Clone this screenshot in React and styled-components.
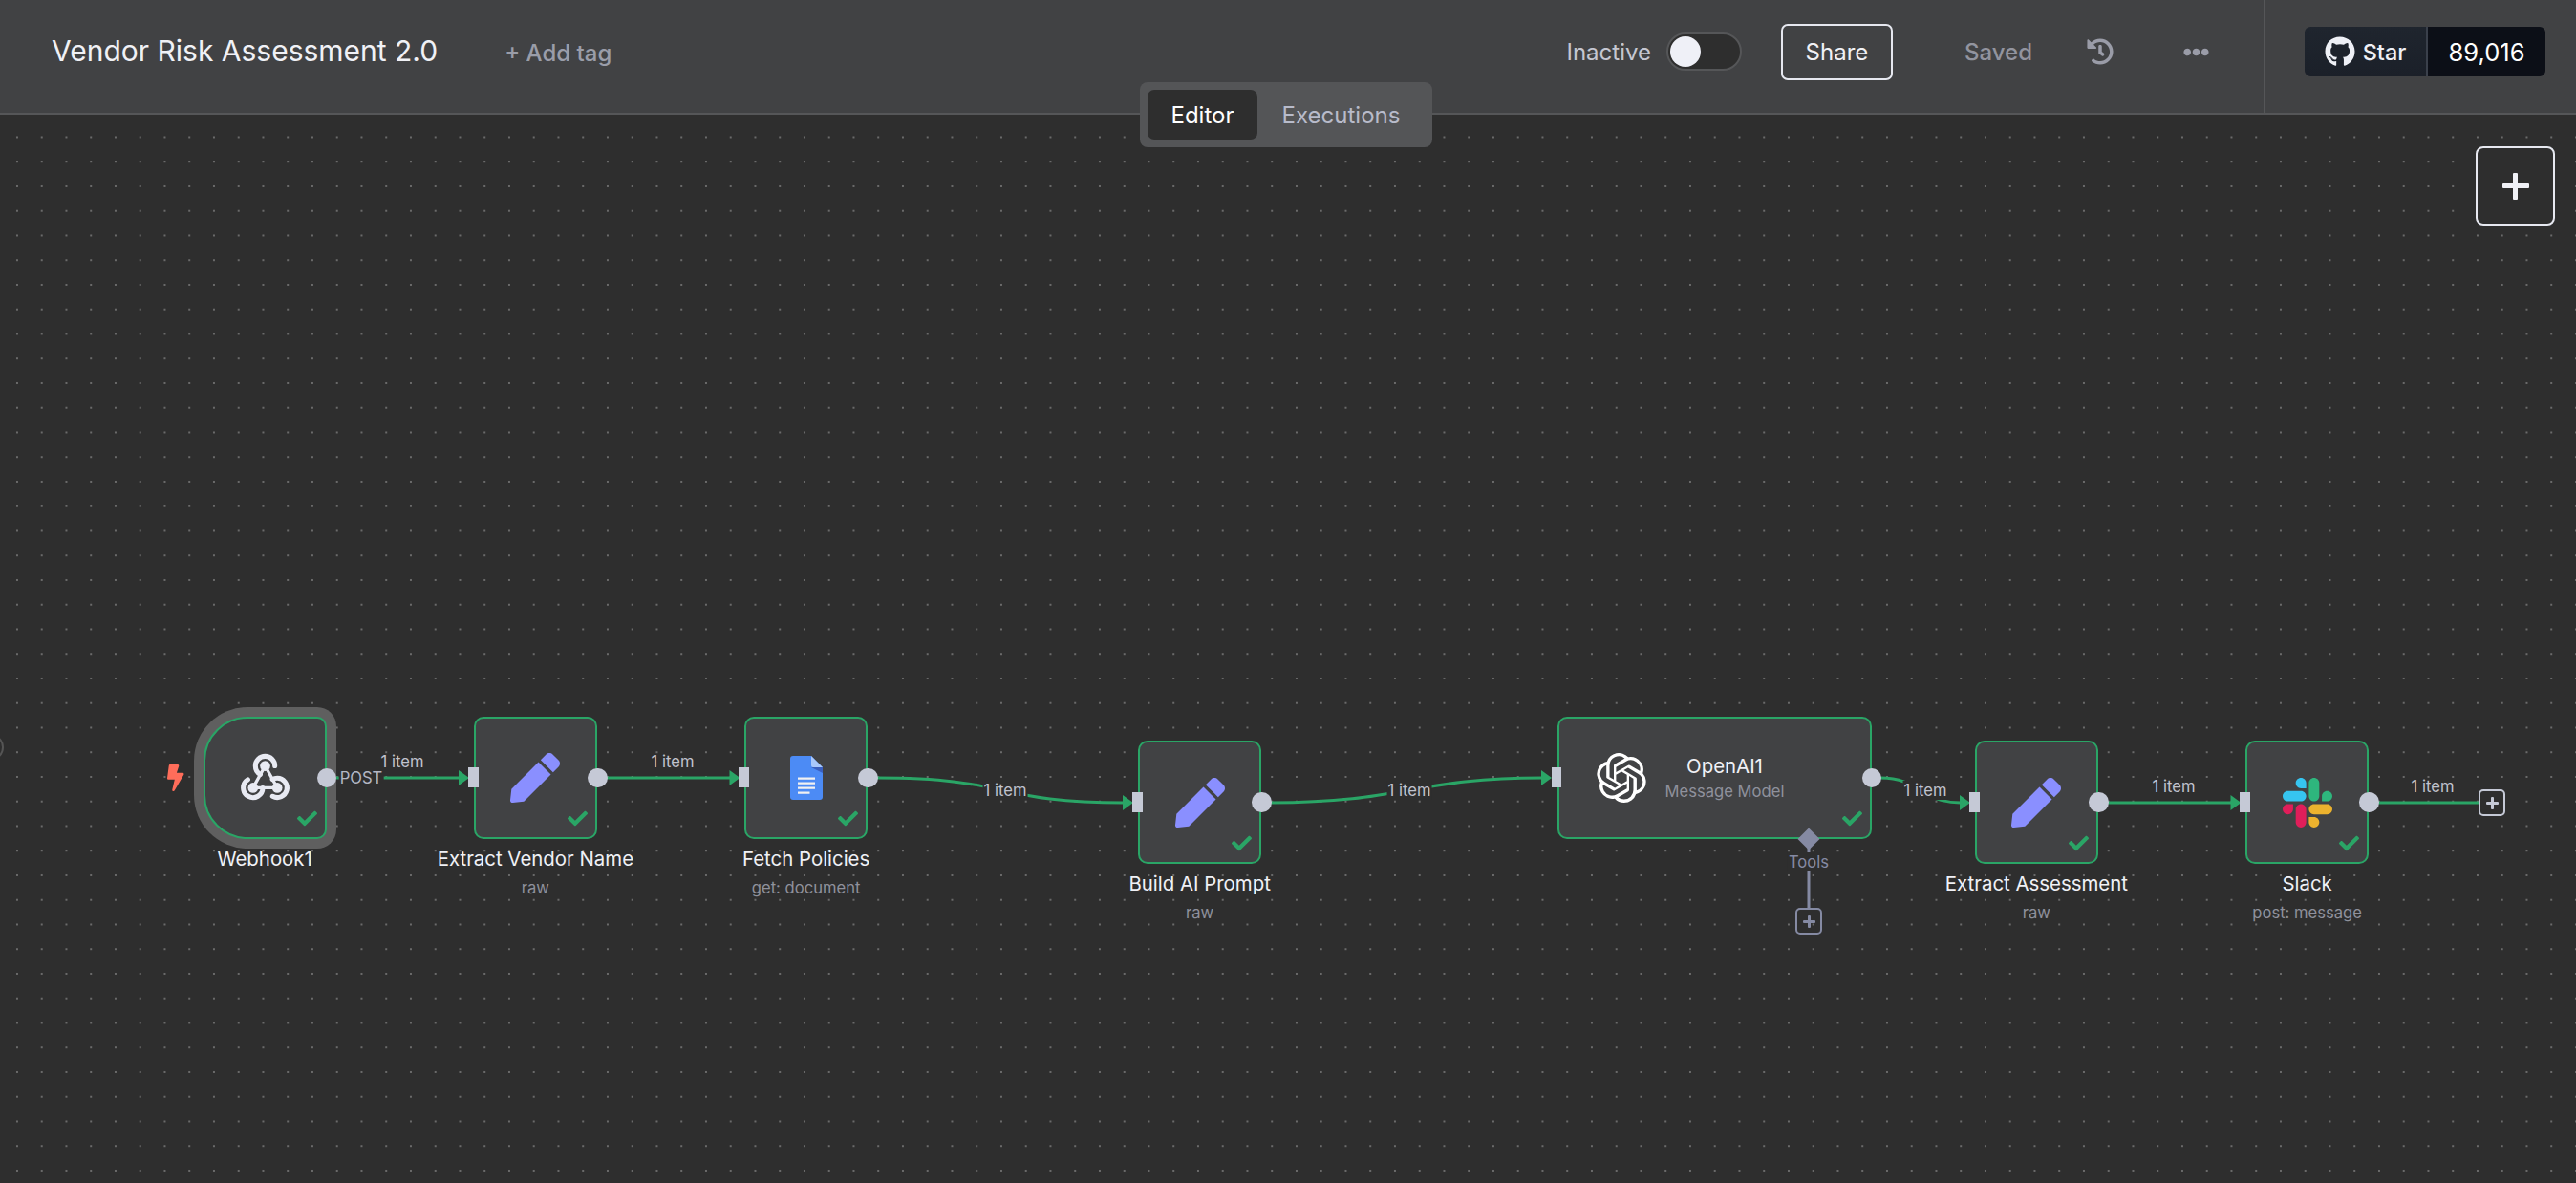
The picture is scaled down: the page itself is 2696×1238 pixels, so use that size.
import React from 'react';
import styled, { createGlobalStyle } from 'styled-components';
import { FaPen, FaCheck, FaBolt, FaHistory, FaEllipsisH, FaGithub } from 'react-icons/fa';
import { SiOpenai } from 'react-icons/si';

const GREEN = '#2aa566';
const HANDLE = '#c5c9d6';
const Global = createGlobalStyle`
  html, body { margin: 0; padding: 0; background: #2e2e2e; }
  * { box-sizing: border-box; }
  body { font-family: Inter, "Liberation Sans", sans-serif; overflow: hidden; }
`;
const Page = styled.div`position: relative; display: flex; flex-direction: column; width: 2696px; height: 1238px;`;
const Header = styled.header`
  display: flex; align-items: stretch; height: 120px; background: #414244; border-bottom: 2px solid #555658; flex: none;
`;
const Title = styled.div`
  align-self: center; margin: 0 0 12px 54px; font-size: 30px; font-weight: 400; color: #f0f1f6; white-space: nowrap;
`;
const AddTag = styled.div`
  align-self: center; margin: 0 0 8px 70px; font-size: 24px; font-weight: 500; color: #9a9da9; white-space: nowrap;
`;
const Actions = styled.div`
  margin-left: auto; display: flex; align-items: center; padding: 0 57px 10px 0;
`;
const StatusText = styled.span`font-size: 24px; font-weight: 400; color: #c5c7d2; white-space: nowrap;`;
const Toggle = styled.div`
  position: relative; width: 79px; height: 40px; margin-left: 16px; border-radius: 20px; background: #2e2e2e; border: 2px solid #555658;
  &::after { content: ''; position: absolute; left: 2px; top: 2px; width: 32px; height: 32px; border-radius: 50%; background: #eff0f7; }
`;
const ShareButton = styled.button`
  width: 117px; height: 59px; margin-left: 41px; border: 2.5px solid #e6e8f0; border-radius: 7px; background: transparent;
  color: #f0f1f6; font: 400 24px Inter, sans-serif; padding: 0;
`;
const Saved = styled.span`margin-left: 75px; font-size: 24px; font-weight: 500; color: #92949f;`;
const HistoryIcon = styled(FaHistory)`margin-left: 57px; width: 28px; height: 28px; color: #9a9ca8;`;
const MoreIcon = styled(FaEllipsisH)`margin-left: 73px; width: 27px; height: 27px; color: #9a9ca8;`;
const GithubArea = styled.div`
  width: 327px; border-left: 2px solid #555658; display: flex; align-items: center; padding: 0 0 10px 41px;
`;
const StarButton = styled.div`
  width: 252px; height: 52px; display: flex; border-radius: 6px; overflow: hidden; color: #eef0f6;
  font-size: 23.5px; font-weight: 500;
`;
const StarLabel = styled.div`
  width: 129px; display: flex; align-items: center; justify-content: center; gap: 8px;
  background: linear-gradient(180deg, #1f252e, #1b2029); border-right: 2px solid #3a404b;
`;
const StarCount = styled.div`flex: 1; display: flex; align-items: center; justify-content: center; background: #0c0f17; color: #fff; font-size: 25.5px; font-weight: 400;`;
const Tabs = styled.div`
  position: absolute; left: 1193px; top: 86px; width: 306px; height: 68px; padding: 8px; display: flex; background: #545557; border-radius: 8px; z-index: 3;
`;
const Tab = styled.div`
  height: 52px; display: flex; align-items: center; justify-content: center; border-radius: 7px; font-size: 24px; font-weight: 400;
  width: ${p => p.$w}px; color: ${p => (p.$active ? '#fff' : '#b8bbca')}; background: ${p => (p.$active ? '#2e2e2e' : 'transparent')};
`;
const Canvas = styled.main`
  position: relative; flex: 1; overflow: hidden; background-color: #2e2e2e;
  background-image: radial-gradient(circle at center, #939393 0, #939393 0.5px, transparent 1px);
  background-size: 25.75px 25.75px; background-position: 5.1px 10.6px;
`;
const Ghost = styled.div`
  position: absolute; left: -24px; top: 648px; width: 28px; height: 28px; border-radius: 50%; border: 2px solid #555;
`;
const AddNode = styled.div`
  position: absolute; left: 2591px; top: 33px; width: 83px; height: 83px; border: 2.5px solid #e6e8f0; border-radius: 8px;
  display: flex; align-items: center; justify-content: center; background: #2e2e2e;
`;
const PlusMark = styled.span`
  position: relative; display: block; width: ${p => p.$s}px; height: ${p => p.$s}px; color: ${p => p.$c};
  &::before, &::after { content: ''; position: absolute; background: currentColor; border-radius: 1px; }
  &::before { left: 0; right: 0; top: calc(50% - ${p => p.$t / 2}px); height: ${p => p.$t}px; }
  &::after { top: 0; bottom: 0; left: calc(50% - ${p => p.$t / 2}px); width: ${p => p.$t}px; }
`;
const EdgeLayer = styled.svg`position: absolute; left: 0; top: 0; width: 2696px; height: 1118px; pointer-events: none;`;
const NodeItem = styled.div`
  position: absolute; left: ${p => p.$x}px; top: ${p => p.$y - 120}px; width: ${p => p.$w}px; display: flex; flex-direction: column; align-items: center;
`;
const NodeBox = styled.div`
  position: relative; width: 100%; height: 128.75px; background: #414244; border: 2.8px solid ${GREEN};
  border-radius: ${p => (p.$trigger ? '46px 10px 10px 46px' : '10px')};
  display: flex; align-items: center; justify-content: center;
  ${p => p.$trigger && 'box-shadow: 0 0 0 10px #5f5f5f;'}
`;
const OutHandle = styled.span`
  position: absolute; right: -12.8px; top: 50%; width: 20.5px; height: 20.5px; margin-top: -10.25px; border-radius: 50%; background: ${HANDLE}; z-index: 2;
`;
const InHandle = styled.span`
  position: absolute; left: -7.8px; top: 50%; width: 10.5px; height: 21px; margin-top: -10.5px; background: ${HANDLE}; z-index: 2;
`;
const Done = styled(FaCheck)`position: absolute; right: 8px; bottom: 9px; width: 21px; height: 21px; color: ${GREEN};`;
const NodeName = styled.div`margin-top: 9px; font-size: 20.4px; font-weight: 400; line-height: 24px; color: #f0f1f6; white-space: nowrap;`;
const NodeSub = styled.div`margin-top: 8px; font-size: 16.6px; line-height: 20px; color: #8f919c; white-space: nowrap;`;
const Pen = styled(FaPen)`width: 52px; height: 52px; color: #8a8fff;`;
const Bolt = styled(FaBolt)`position: absolute; left: 175px; top: 680px; width: 17.5px; height: 28px; color: #ff6d5a;`;
const WideContent = styled.div`display: flex; align-items: center; width: 100%; padding-left: 39px;`;
const WideText = styled.div`width: 165px; display: flex; flex-direction: column; align-items: center;`;
const WideName = styled.div`font-size: 20.4px; font-weight: 400; line-height: 24px; color: #f0f1f6;`;
const WideSub = styled.div`margin-top: 4px; font-size: 16.6px; line-height: 20px; color: #8f919c;`;
const EdgeLabel = styled.div`
  position: absolute; left: ${p => p.$x}px; top: ${p => p.$y - 120}px; transform: translate(-50%, -50%); padding: 0 1px;
  font-size: 16.6px; line-height: 20px; color: ${p => p.$c || '#c0c3ce'}; white-space: nowrap;
  background: ${p => (p.$bg ? '#2e2e2e' : 'transparent')};
`;
const ToolsAdd = styled.div`
  position: absolute; left: 1879px; top: 830px; width: 28px; height: 28px; border: 2.6px solid #858aa3; border-radius: 5px;
  display: flex; align-items: center; justify-content: center;
`;
const EndAdd = styled.div`
  position: absolute; left: 2594px; top: 706px; width: 28px; height: 28px; border: 2.6px solid ${HANDLE}; border-radius: 5px;
  display: flex; align-items: center; justify-content: center; background: #2e2e2e;
`;

const WebhookIcon = () => (
  <svg width="61" height="61" viewBox="0 0.7 24 24" fill="none" stroke="#e8eaf3" strokeLinecap="round">
    <path strokeWidth="2" d="M16 8a4 4 0 1 0-8 0c0 1.5.77 2.82 2 3.5" />
    <path strokeWidth="2" d="M4.88 13.61a4 4 0 1 0 6.12 3.39" />
    <path strokeWidth="2" d="M15.07 20.5a4 4 0 1 0 1.93-7.5c-.7 0-1.42.18-2 .5" />
    <path strokeWidth="1.3" d="M12 8 7 17h10z" />
    <g fill="#e8eaf3" stroke="none">
      <circle cx="12" cy="8" r="2.1" />
      <circle cx="7" cy="17" r="2.1" />
      <circle cx="17" cy="17" r="2.1" />
    </g>
  </svg>
);
const DocsIcon = () => (
  <svg width="34" height="46" viewBox="0 0 34 46">
    <path fill="#4c8bf5" d="M3 0h19l12 12v31a3 3 0 0 1-3 3H3a3 3 0 0 1-3-3V3a3 3 0 0 1 3-3z" />
    <path fill="#3a5fbf" d="M22 12l12 6v-6z" />
    <path fill="#a9c8fb" d="M22 0l12 12H24a2 2 0 0 1-2-2z" />
    <path fill="#f1f1f1" d="M8 22.5h18v2.2H8zM8 27.5h18v2.2H8zM8 32.5h18v2.2H8zM8 37.5h12.5v2.2H8z" />
  </svg>
);
const SlackIcon = () => (
  <svg width="52" height="52" viewBox="0 0 122.8 122.8">
    <path fill="#e01e5a" d="M25.8 77.6c0 7.1-5.8 12.9-12.9 12.9S0 84.7 0 77.6s5.8-12.9 12.9-12.9h12.9v12.9zm6.5 0c0-7.1 5.8-12.9 12.9-12.9s12.9 5.8 12.9 12.9v32.3c0 7.1-5.8 12.9-12.9 12.9s-12.9-5.8-12.9-12.9V77.6z" />
    <path fill="#36c5f0" d="M45.2 25.8c-7.1 0-12.9-5.8-12.9-12.9S38.1 0 45.2 0s12.9 5.8 12.9 12.9v12.9H45.2zm0 6.5c7.1 0 12.9 5.8 12.9 12.9s-5.8 12.9-12.9 12.9H12.9C5.8 58.1 0 52.3 0 45.2s5.8-12.9 12.9-12.9h32.3z" />
    <path fill="#2eb67d" d="M97 45.2c0-7.1 5.8-12.9 12.9-12.9s12.9 5.8 12.9 12.9-5.8 12.9-12.9 12.9H97V45.2zm-6.5 0c0 7.1-5.8 12.9-12.9 12.9s-12.9-5.8-12.9-12.9V12.9C64.7 5.8 70.5 0 77.6 0s12.9 5.8 12.9 12.9v32.3z" />
    <path fill="#ecb22e" d="M77.6 97c7.1 0 12.9 5.8 12.9 12.9s-5.8 12.9-12.9 12.9-12.9-5.8-12.9-12.9V97h12.9zm0-6.5c-7.1 0-12.9-5.8-12.9-12.9s5.8-12.9 12.9-12.9h32.3c7.1 0 12.9 5.8 12.9 12.9s-5.8 12.9-12.9 12.9H77.6z" />
  </svg>
);

const NODES = [
  { id: 'a', x: 212.75, y: 749.5, name: 'Webhook1', icon: <WebhookIcon />, trigger: true },
  { id: 'b', x: 496, y: 749.5, name: 'Extract Vendor Name', sub: 'raw', icon: <Pen /> },
  { id: 'c', x: 779.25, y: 749.5, name: 'Fetch Policies', sub: 'get: document', icon: <DocsIcon /> },
  { id: 'd', x: 1191.25, y: 775.25, name: 'Build AI Prompt', sub: 'raw', icon: <Pen /> },
  { id: 'e', x: 2067, y: 775.25, name: 'Extract Assessment', sub: 'raw', icon: <Pen /> },
  { id: 'f', x: 2350.25, y: 775.25, name: 'Slack', sub: 'post: message', icon: <SlackIcon /> },
];
const EDGES = [
  { d: 'M351 814H481', tip: [491, 814] },
  { d: 'M635 814H764', tip: [774.5, 814] },
  { d: 'M918 814C1060 814 1040 840 1176 840', tip: [1186, 840] },
  { d: 'M1330 840C1470 840 1480 814 1614 814', tip: [1624, 814] },
  { d: 'M1968 814C2010 814 2010 840 2052 840', tip: [2062, 840] },
  { d: 'M2206 840H2335', tip: [2345.5, 840] },
  { d: 'M2489 840H2594' },
];
const LABELS = [
  { x: 378, y: 814, t: 'POST', bg: true, c: '#b4b7c4' },
  { x: 421, y: 797, t: '1 item' },
  { x: 704, y: 797, t: '1 item' },
  { x: 1052, y: 827, t: '1 item', bg: true },
  { x: 1475, y: 827, t: '1 item', bg: true },
  { x: 2015, y: 827, t: '1 item', bg: true },
  { x: 2275, y: 823, t: '1 item' },
  { x: 2546, y: 823, t: '1 item' },
  { x: 1893, y: 902, t: 'Tools', bg: true, c: '#858aa3' },
];

export default function App() {
  return (
    <Page>
      <Global />
      <Header>
        <Title>Vendor Risk Assessment 2.0</Title>
        <AddTag>+ Add tag</AddTag>
        <Actions>
          <StatusText>Inactive</StatusText>
          <Toggle />
          <ShareButton>Share</ShareButton>
          <Saved>Saved</Saved>
          <HistoryIcon />
          <MoreIcon />
        </Actions>
        <GithubArea>
          <StarButton>
            <StarLabel><FaGithub size={32} />Star</StarLabel>
            <StarCount>89,016</StarCount>
          </StarButton>
        </GithubArea>
      </Header>
      <Tabs>
        <Tab $active $w={115}>Editor</Tab>
        <Tab $w={175}>Executions</Tab>
      </Tabs>
      <Canvas>
        <Ghost />
        <AddNode><PlusMark $s={28} $t={5} $c="#f0f1f6" /></AddNode>
        <EdgeLayer viewBox="0 120 2696 1118">
          {EDGES.map(e => (
            <g key={e.d}>
              <path d={e.d} fill="none" stroke={GREEN} strokeWidth="3" />
              {e.tip && <polygon fill={GREEN} points={`${e.tip[0] - 11},${e.tip[1] - 8} ${e.tip[0]},${e.tip[1]} ${e.tip[0] - 11},${e.tip[1] + 8}`} />}
            </g>
          ))}
          <path d="M1893 878V950" stroke="#858aa3" strokeWidth="3" />
        </EdgeLayer>
        <Bolt />
        {NODES.map(n => (
          <NodeItem key={n.id} $x={n.x} $y={n.y} $w={128.75}>
            <NodeBox $trigger={n.trigger}>
              {!n.trigger && <InHandle />}
              {n.icon}
              <OutHandle />
              <Done />
            </NodeBox>
            <NodeName>{n.name}</NodeName>
            {n.sub && <NodeSub>{n.sub}</NodeSub>}
          </NodeItem>
        ))}
        <NodeItem $x={1629.5} $y={749.5} $w={329}>
          <NodeBox>
            <InHandle />
            <WideContent>
              <SiOpenai size={52} color="#fff" />
              <WideText>
                <WideName>OpenAI1</WideName>
                <WideSub>Message Model</WideSub>
              </WideText>
            </WideContent>
            <OutHandle />
            <Done />
          </NodeBox>
        </NodeItem>
        <EdgeLayer viewBox="0 120 2696 1118">
          <polygon fill="#858aa3" points="1893,866.5 1904.5,878 1893,889.5 1881.5,878" />
        </EdgeLayer>
        {LABELS.map(l => (
          <EdgeLabel key={`${l.x}-${l.y}`} $x={l.x} $y={l.y} $bg={l.bg} $c={l.c}>{l.t}</EdgeLabel>
        ))}
        <ToolsAdd><PlusMark $s={13} $t={3} $c="#858aa3" /></ToolsAdd>
        <EndAdd><PlusMark $s={13} $t={3} $c={HANDLE} /></EndAdd>
      </Canvas>
    </Page>
  );
}
